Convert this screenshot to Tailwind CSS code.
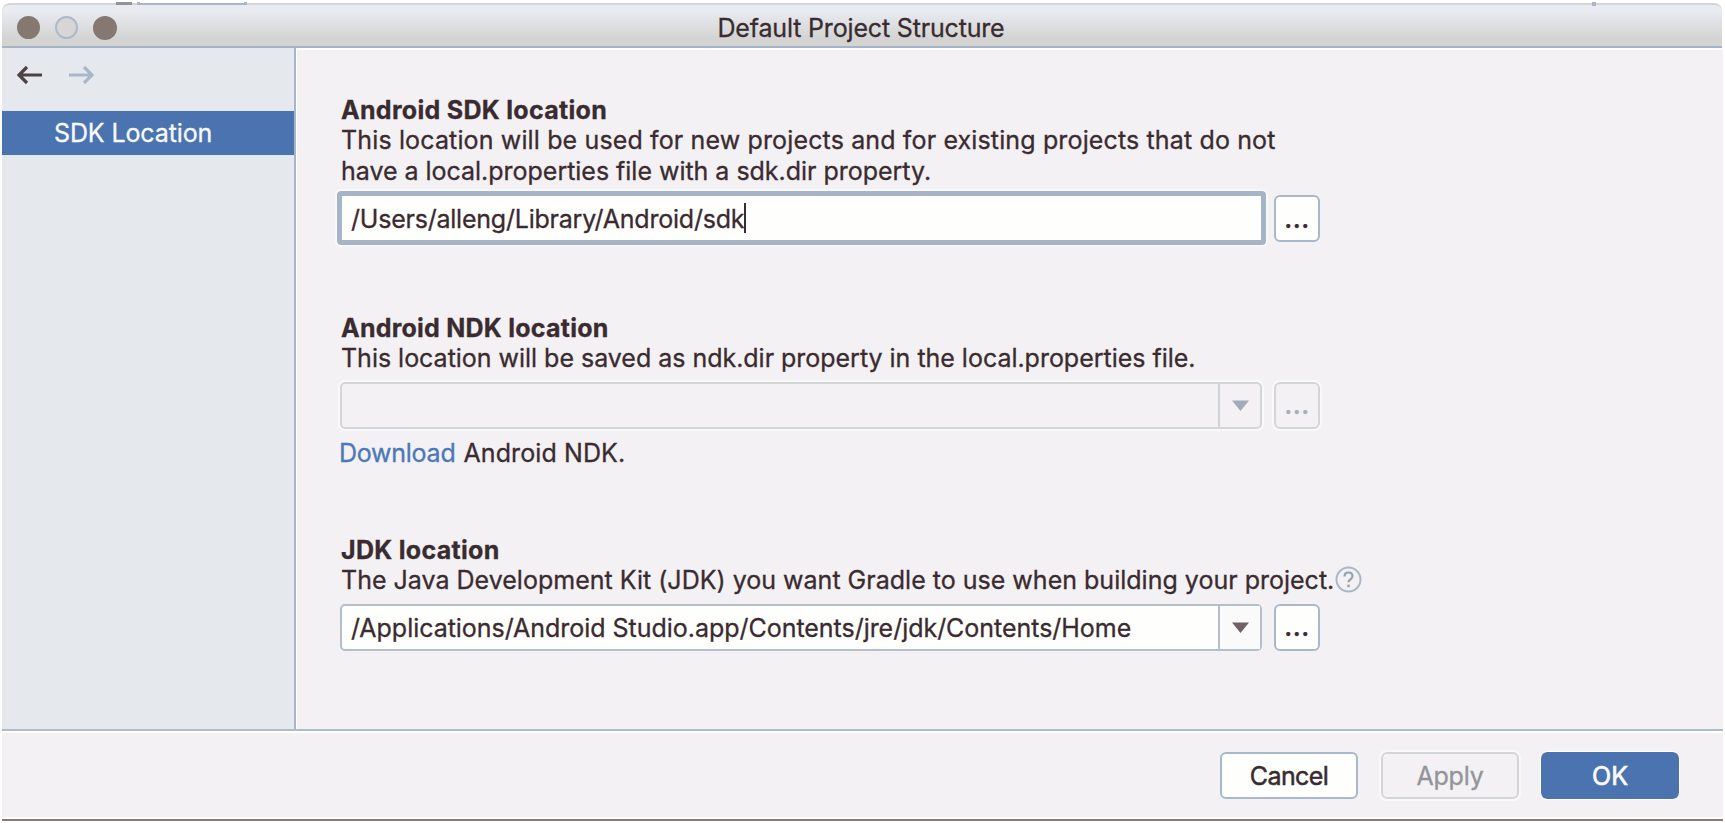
<!DOCTYPE html>
<html lang="en">
<head>
<meta charset="utf-8">
<title>Default Project Structure</title>
<script src="https://cdn.jsdelivr.net/npm/@tailwindcss/browser@4"></script>
</head>
<body class="bg-white font-['Inter','Liberation_Sans',sans-serif] text-[25px] text-[#3a2b30] [-webkit-text-stroke:0.3px_currentColor] whitespace-nowrap overflow-hidden">
<div class="relative w-[1725px] h-[823px] px-[2px] pt-[3px] flex flex-col overflow-hidden">
  <!-- window edge remnants above the title bar -->
  <div class="absolute left-[116px] top-[2px] w-[16px] h-[3px] bg-[#8f939b]"></div>
  <div class="absolute left-[137px] top-[3px] w-[110px] h-[2px] bg-[#a9b5c6]"></div>
  <div class="absolute left-[137px] top-[2px] size-[3px] bg-[#a9b5c6]"></div>
  <div class="absolute left-[244px] top-[2px] size-[3px] bg-[#a9b5c6]"></div>
  <div class="absolute left-[1592px] top-[2px] size-[4px] bg-[#a9b5c6]"></div>

  <!-- title bar -->
  <header class="h-[45px] w-[1720px] shrink-0 rounded-t-[8px] border-t-2 border-t-[#d6d5d4] border-b-2 border-b-[#a6b3c8] bg-linear-to-b from-[#e8ebf0] from-15% to-[#d4d4d3] to-80% grid grid-cols-[1fr_auto_1fr] items-center">
    <div class="flex items-center gap-[15px] pl-[15px] pt-[2px]">
      <span class="size-[23px] rounded-full bg-[#857870]"></span>
      <span class="size-[23px] rounded-full bg-[#d6d6d4] border-2 border-[#adb9ca]"></span>
      <span class="size-[24px] rounded-full bg-[#857870]"></span>
    </div>
    <h1 class="leading-[40px] tracking-[-0.17px] pt-[3px] -ml-[2px]">Default Project Structure</h1>
    <div></div>
  </header>

  <div class="flex h-[681px] shrink-0">
    <!-- sidebar -->
    <aside class="w-[292px] bg-[#e5e9ee] shrink-0">
      <div class="h-[63px] flex gap-[26px] pl-[15px] pt-[17px]">
        <svg class="w-[26px] h-[20px]" viewBox="0 0 26 20" fill="none" stroke="#4d4144" stroke-width="3.2"><path d="M25 10H2M10 2L2 10l8 8"/></svg>
        <svg class="w-[26px] h-[20px]" viewBox="0 0 26 20" fill="none" stroke="#a9b7c9" stroke-width="3.2"><path d="M0 10h23M15 2l8 8-8 8"/></svg>
      </div>
      <div class="h-[44px] bg-[#4a73af] text-[#f8fafc] pl-[52px] leading-[45px] tracking-[-0.12px]">SDK Location</div>
    </aside>
    <div class="w-[3px] bg-[#a9b5c6] border-r border-white shrink-0"></div>

    <!-- settings -->
    <main class="grow bg-[#f3f1f3] border-t-2 border-white pl-[40px] pt-[45px]">
      <section class="h-[218px]">
        <h2 class="font-bold leading-[30.4px] tracking-[0.3px] pl-[4px]">Android SDK location</h2>
        <p class="leading-[30.4px] tracking-[0.14px] pl-[4px]">This location will be used for new projects and for existing projects that do not</p>
        <p class="leading-[30.4px] tracking-[-0.02px] pl-[4px]">have a local.properties file with a sdk.dir property.</p>
        <div class="flex items-center gap-[8px] mt-[5px]">
          <div class="w-[929px] h-[54px] rounded-[4px] border-[5px] border-[#a6b4c7] bg-[#fefefd] flex items-center pl-[9px] outline-2 outline-white/60">
            <span class="tracking-[-0.22px] leading-[40px] pt-[2px]">/Users/alleng/Library/Android/sdk</span><span class="w-[2px] h-[30px] bg-[#3a2b30]"></span>
          </div>
          <button class="w-[46px] h-[47px] mt-[1px] rounded-[6px] border-2 border-[#aab7c8] bg-[#fefefd] font-semibold leading-[40px] tracking-[0.6px]">...</button>
        </div>
      </section>

      <section class="h-[222px] pl-[3px]">
        <h2 class="font-bold leading-[30.4px] tracking-[0.24px] pl-px">Android NDK location</h2>
        <p class="leading-[30.4px] tracking-[-0.02px] pl-px">This location will be saved as ndk.dir property in the local.properties file.</p>
        <div class="flex gap-[12px] mt-[8px]">
          <div class="w-[922px] h-[47px] rounded-[5px] border-2 border-[#d3d5d6] flex outline-2 outline-white/60">
            <div class="grow"></div>
            <div class="w-[42px] border-l-2 border-[#d0d3d6] flex items-center justify-center">
              <svg class="w-[17px] h-[11px]" viewBox="0 0 17 11"><path d="M0 0.500h17L8.500 11z" fill="#a0abbb"/></svg>
            </div>
          </div>
          <button class="w-[46px] h-[47px] rounded-[6px] border-2 border-[#d3d5d6] text-[#a5afbb] font-semibold leading-[42px] tracking-[0.6px] outline-2 outline-white/60">...</button>
        </div>
        <p class="leading-[30px] mt-[9px] -ml-px"><a class="text-[#4a78b8] tracking-[-0.25px]">Download</a><span class="ml-[8px] tracking-[0.1px]">Android NDK.</span></p>
      </section>

      <section class="pl-[3px]">
        <h2 class="font-bold leading-[30.4px] tracking-[0.3px] pl-px">JDK location</h2>
        <p class="leading-[30.4px] tracking-[0.01px] flex items-center pl-px"><span>The Java Development Kit (JDK) you want Gradle to use when building your project.</span>
          <svg class="size-[27px] ml-[1px] -mt-[3px] shrink-0" viewBox="0 0 27 27" fill="none" stroke="#a9b7c8" stroke-width="2"><circle cx="13.500" cy="13.500" r="12"/><path stroke="#95a0b0" stroke-width="2.200" d="M9.500 10.500c0-2.500 1.700-4 4-4s4 1.500 4 3.600c0 3.400-4 3-4 6.200"/><path stroke="#95a0b0" stroke-width="2.400" d="M13.500 18.600v2.600"/></svg>
        </p>
        <div class="flex gap-[12px] mt-[8px]">
          <div class="w-[922px] h-[47px] rounded-[5px] border-2 border-[#b4bfca] bg-[#fefefd] flex">
            <div class="grow pl-[9px] leading-[44px] tracking-[-0.03px]">/Applications/Android Studio.app/Contents/jre/jdk/Contents/Home</div>
            <div class="w-[42px] border-l-2 border-[#b4bfca] bg-[#fbfafb] flex items-center justify-center">
              <svg class="w-[17px] h-[11px]" viewBox="0 0 17 11"><path d="M0 0.500h17L8.500 11z" fill="#6d6367"/></svg>
            </div>
          </div>
          <button class="w-[46px] h-[47px] rounded-[6px] border-2 border-[#aab7c8] bg-[#fefefd] font-semibold leading-[42px] tracking-[0.6px]">...</button>
        </div>
      </section>
    </main>
  </div>

  <!-- actions -->
  <footer class="h-[90px] shrink-0 border-t-2 border-t-[#b0bcc9] bg-[#f3f1f3]">
    <div class="border-t-2 border-white h-[88px] border-b-2 flex justify-end gap-[22px] pr-[44px] pt-[19px]">
      <button class="w-[138px] h-[47px] mr-px rounded-[6px] border-2 border-[#a9b7ca] bg-[#fefefd] leading-[42px] tracking-[-0.6px] [-webkit-text-stroke:0.5px_currentColor]">Cancel</button>
      <button class="w-[138px] h-[47px] rounded-[6px] border-2 border-[#d3d5d6] text-[#939499] leading-[42px] tracking-[-0.2px] outline-2 outline-white/60">Apply</button>
      <button class="w-[138px] h-[47px] rounded-[6px] bg-[#4a73af] text-[#f8fafc] leading-[46px] [-webkit-text-stroke:0.7px_currentColor] outline-1 outline-white">OK</button>
    </div>
  </footer>
  <div class="h-[2px] shrink-0 bg-[#877b74]"></div>
</div>
</body>
</html>
